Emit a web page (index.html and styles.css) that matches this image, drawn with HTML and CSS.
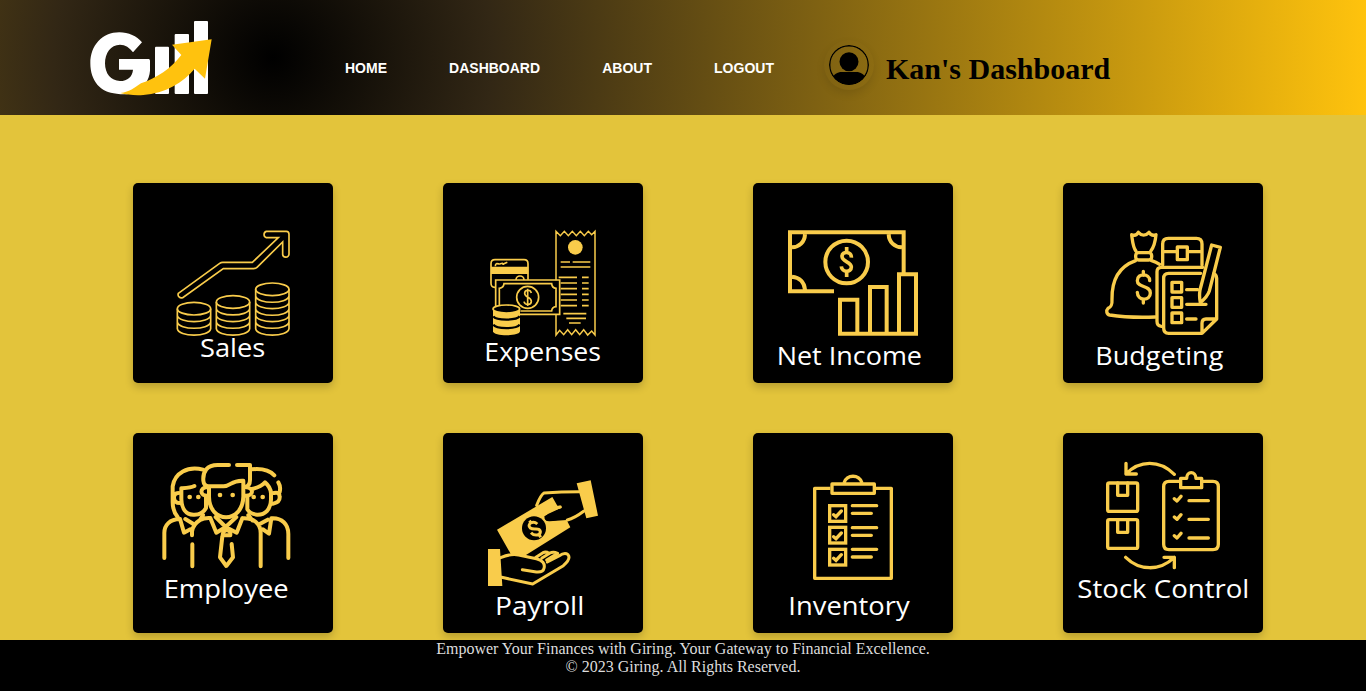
FILE: index.html
```html
<!DOCTYPE html>
<html lang="en">
<head>
<meta charset="utf-8">
<title>Giring Dashboard</title>
<link rel="stylesheet" href="styles.css">
</head>
<body>
<header class="header">
  <svg class="logo" viewBox="45 45 390 255" aria-label="Giring">
    <g fill="#fff">
      <rect x="255" y="140" width="42" height="142" rx="3"/>
      <rect x="314" y="102" width="43" height="180" rx="3"/>
      <rect x="372" y="63" width="42" height="219" rx="3"/>
      <path d="M216 127 L189 157 C179 143 166 134 150 134 C122 134 105 159 105 190 C105 221 123 243 150 243 C173 243 187 230 189 209 H147 V177 H236 Q240 177 240 182 V212 C238 240 220 268 190 279 C174 284 158 284 140 281 C91 279 61 242 61 190 C61 136 97 97 148 97 C176 97 200 108 216 127 Z"/>
    </g>
    <path d="M151 279 C180 276 195 262 213 250 C260 234 304 205 334 165 L306 134 L425 118 L405 236 L374 206 C340 248 285 280 220 285 C195 287 170 284 151 279 Z" fill="#ffc20e"/>
  </svg>
  <nav class="nav">
    <a class="nav-link">HOME</a>
    <a class="nav-link">DASHBOARD</a>
    <a class="nav-link">ABOUT</a>
    <a class="nav-link">LOGOUT</a>
  </nav>
  <div class="user">
    <svg class="avatar" viewBox="0 0 40 40">
      <defs><clipPath id="face"><circle cx="20" cy="20" r="19.5"/></clipPath></defs>
      <circle cx="20" cy="20" r="19.3" fill="none" stroke="#000" stroke-width="1.4"/>
      <circle cx="20" cy="16.7" r="9.5"/>
      <path d="M3 34 C5 29 8 27 13 27 H27 C32 27 35 29 37 34 L30 40 H10 Z" clip-path="url(#face)"/>
    </svg>
    <h1 class="title">Kan's Dashboard</h1>
  </div>
</header>

<main class="grid">
  <a class="card"><svg class="art" viewBox="30 30 600 600">
    <g stroke-width="5">
      <path d="M166 361 L290 271 Q294 268 299 268 H388 L466 194 H430 A10 10 0 0 1 430 175 H490 Q498 175 498 184 V243 A9.500 9.500 0 0 1 479 243 V207 L402 283 Q398 287 392 287 H301 L179 374 A10 10 0 0 1 166 361 Z"/>
      <ellipse cx="213" cy="407" rx="50" ry="19"/>
      <path d="M163 407 V467 C166 493 260 493 263 467 V407 M163 427 C167 452 259 452 263 427 M163 447 C167 472 259 472 263 447"/>
      <ellipse cx="330" cy="387" rx="50" ry="19"/>
      <path d="M280 387 V467 C283 493 377 493 380 467 V387 M280 407 C284 432 376 432 380 407 M280 427 C284 452 376 452 380 427 M280 447 C284 472 376 472 380 447"/>
      <ellipse cx="448" cy="349" rx="50" ry="19"/>
      <path d="M398 349 V467 C401 493 495 493 498 467 V349 M398 369 C402 394 494 394 498 369 M398 388 C402 413 494 413 498 388 M398 408 C402 433 494 433 498 408 M398 427 C402 452 494 452 498 427 M398 447 C402 472 494 472 498 447"/>
    </g>
    <text class="label" x="231" y="553" textLength="196" lengthAdjust="spacingAndGlyphs">Sales</text>
  </svg></a>

  <a class="card"><svg class="art" viewBox="30 30 600 600">
    <g stroke-width="5">
      <path d="M369 322 V175 L382 188 L394 175 L406 188 L418 175 L430 188 L442 175 L454 188 L466 175 L476 185 L486 175 V486 L476 474 L464 486 L452 470 L440 485 L428 470 L416 485 L404 470 L392 485 L380 472 L369 486 V425" stroke-width="4.500"/>
      <circle cx="427" cy="223" r="22" class="solid"/>
      <path d="M383 267 H411 M419 267 H472 M383 282 H472 M377 313 H432 M383 330 H432 M383 347 H432 M383 364 H432 M383 381 H432 M383 398 H432 M447 313 H467 M447 330 H467 M447 347 H467 M447 364 H467 M447 381 H467 M447 398 H467 M391 422 H460 M400 436 H459 M408 450 H443"/>
      <path d="M188 343 H185 Q174 343 174 331 V272 Q174 260 186 260 H273 Q285 260 285 272 V320"/>
      <path class="solid" d="M174 281 H286 V303 H174 Z"/>
      <path d="M187 280 C187 264 200 277 203 272 C213 267 207 278 213 272 L223 268 M249 321 A12 12 0 0 1 273 321"/>
      <path d="M188 404 V321 H380 V424 H260"/>
      <path d="M199 396 V346 Q212 344 213 332 H356 Q357 345 369 346 V401 Q357 402 356 414 H262"/>
      <circle cx="284" cy="373" r="33"/>
      <path d="M295 360 C292 348 275 350 275 361 C275 375 295 370 295 385 C295 397 276 398 273 386 M284 347 V399"/>
      <path class="solid" d="M180 408 V475 C181 491 260 491 261 475 V408 Z"/>
      <ellipse cx="220" cy="408" rx="40" ry="12" fill="#000"/>
      <path stroke="#000" stroke-width="7" d="M181 430 C190 443 250 443 260 430 M181 455 C190 469 250 469 260 455"/>
    </g>
    <text class="label" x="154" y="563" textLength="350" lengthAdjust="spacingAndGlyphs">Expenses</text>
  </svg></a>

  <a class="card"><svg class="art" viewBox="30 30 600 600">
    <g stroke-width="12">
      <path d="M273 355 H141 V178 H482 V300 M186 184 C185 207 169 222 147 223 M437 184 C438 207 454 222 476 223 M147 311 C170 313 184 328 186 350"/>
      <circle cx="311" cy="267" r="64"/>
      <path d="M325 254 C326 234 297 234 297 250 C297 267 325 266 325 282 C325 300 296 299 295 280 M311 222 V240 M311 294 V312" stroke-width="11"/>
      <path d="M291 482 V380 H343 V482 M381 482 V342 H431 V482 M468 482 V304 H519 V482 H285"/>
    </g>
    <text class="label" x="101" y="577" textLength="436" lengthAdjust="spacingAndGlyphs">Net Income</text>
  </svg></a>

  <a class="card"><svg class="art" viewBox="30 30 600 600">
    <g stroke-width="10" stroke-linecap="round" stroke-linejoin="round">
      <path d="M249 235 C239 221 239 207 236 185 Q249 191 256 178 Q272 195 288 178 Q296 191 309 185 C307 207 303 222 293 235"/>
      <rect x="248" y="239" width="48" height="22" rx="9"/>
      <path d="M248 263 C200 280 176 321 177 379 C178 396 175 402 165 406 C159 412 160 424 170 426 C215 433 260 434 307 432 M294 262 Q310 267 320 274"/>
      <path d="M290 323 C291 302 253 298 253 323 C253 345 292 336 292 360 C292 386 253 384 253 358 M271 295 V307 M271 379 V390"/>
      <path d="M329 276 V213 Q329 196 346 196 H430 Q447 196 447 213 V276 M329 236 H371 M404 236 H447"/>
      <rect x="373" y="222" width="30" height="38"/>
      <path d="M449 283 H325 Q312 283 312 296 V445 Q312 459 325 460 M443 301 H347 Q332 301 332 316 V465 Q332 481 347 481 H447 L491 438 V316 Q490 304 482 303 M447 481 V451 Q447 438 459 438 H490"/>
      <path d="M357 328 H386 V357 H357 Z M357 374 H386 V403 H357 Z M357 420 H386 V449 H357 Z M401 350 H434 M401 394 H459 M401 438 H429"/>
      <path d="M476 216 L502 223 L469 354 Q464 370 442 389 Q438 370 441 351 Z"/>
    </g>
    <text class="label" x="127" y="577" textLength="384" lengthAdjust="spacingAndGlyphs">Budgeting</text>
  </svg></a>

  <a class="card"><svg class="art" viewBox="30 30 600 600">
    <g stroke-width="12" stroke-linecap="round" stroke-linejoin="round">
      <path d="M318 126 H284 C252 126 239 145 241 173 C242 184 248 190 257 190 H302 C324 190 324 171 361 173 V221 C359 303 259 303 258 221 V192 M342 126 H381 V170 C381 185 375 191 364 192 M250 193 C230 195 230 219 253 218 M370 193 C393 195 393 219 367 218"/>
      <path d="M240 140 C194 128 155 150 149 190 V238 C149 258 153 269 164 282 M214 189 C204 194 187 195 175 196 V229 C176 255 188 275 211 275 C229 276 241 270 249 255 V222 M166 210 Q153 210 153 224 Q153 240 172 240"/>
      <path d="M386 139 C415 136 440 142 454 157 M466 178 Q474 191 470 207 M387 198 Q413 192 426 178 Q443 192 444 211 V230 C443 260 426 276 402 275 Q382 274 373 259 V222 M453 210 Q470 206 470 222 Q471 237 451 242"/>
      <path d="M124 405 V332 C123 306 141 288 171 288 M171 288 L183 329 L202 319 M207 337 V326 Q209 305 231 291 Q243 284 262 285 L280 329 L308 312 L278 282 M308 312 L341 329 L358 286 M308 312 L340 282 M358 286 C391 284 413 301 413 330 V430 M208 364 V430 M210 302 L187 288 M420 319 L438 332 L445 286 M445 286 C477 284 496 304 496 333 V405 M434 290 L406 305 M231 291 L240 276 M388 292 L376 276"/>
      <path d="M301 326 L311 320 L322 326 V337 H299 Z M298 340 L291 403 L310 429 L330 403 L326 363"/>
      <g stroke="none" fill="#f9cc4b"><circle cx="291" cy="216" r="7"/><circle cx="329" cy="216" r="7"/><circle cx="200" cy="222" r="7"/><circle cx="226" cy="222" r="7"/><circle cx="392" cy="222" r="7"/><circle cx="419" cy="222" r="7"/></g>
    </g>
    <text class="label" x="122" y="525" textLength="375" lengthAdjust="spacingAndGlyphs">Employee</text>
  </svg></a>

  <a class="card"><svg class="art" viewBox="30 30 600 600">
    <path class="solid" d="M431 181 L473 172 L495 278 L460 286 Z M165 378 H201 L208 489 H165 Z"/>
    <path class="solid" d="M192 320 L358 222 L373 248 L386 248 L386 256 L334 280 Q335 296 350 295 L401 291 L412 313 L279 396 L235 396 Z"/>
    <g stroke-width="9" stroke-linejoin="round" stroke-linecap="round">
      <path d="M203 404 Q234 391 257 396 L310 407 C328 411 337 422 333 436 C331 447 322 448 310 447 L268 440 M206 463 L299 483 L391 428 Q415 407 405 395 Q395 387 378 399 L343 417 M309 403 L330 389 Q339 385 348 391 M327 405 L350 391 Q360 385 374 391 L341 411"/>
    </g>
    <circle cx="303" cy="316" r="36" fill="#000" stroke="none"/>
    <path d="M313 303 C299 290 280 305 292 315 C302 323 319 312 322 325 C323 338 304 340 294 329 M289 293 L297 302 M317 333 L323 343" stroke-width="9"/>
    <path d="M386 254 L345 273 Q334 279 335 287 Q338 296 352 294 L401 287 L430 270 V240 H380 Z" fill="#000" stroke="none"/>
    <g stroke-width="9" stroke-linejoin="round" stroke-linecap="round">
      <path d="M311 247 C318 229 323 216 333 210 Q385 206 439 206 M453 264 C437 276 423 286 403 291 M366 256 L382 252"/>
    </g>
    <text class="label" x="186" y="577" textLength="268" lengthAdjust="spacingAndGlyphs">Payroll</text>
  </svg></a>

  <a class="card"><svg class="art" viewBox="30 30 600 600">
    <g stroke-width="10" stroke-linejoin="round">
      <path d="M262 196 H215 V466 H445 V196 H399 M303 180 C310 153 350 153 357 180"/>
      <rect x="267" y="183" width="127" height="28"/>
    </g>
    <g stroke-width="10" stroke-linecap="round">
      <rect x="260" y="248" width="48" height="47"/><rect x="260" y="313" width="48" height="47"/><rect x="260" y="379" width="48" height="47"/>
      <path d="M272 275 L279 281 L295 264 M272 341 L279 347 L295 330 M272 406 L279 412 L295 395 M328 248 H401 M328 271 H385 M328 314 H401 M328 337 H385 M328 379 H401 M328 402 H385"/>
    </g>
    <text class="label" x="136" y="577" textLength="364" lengthAdjust="spacingAndGlyphs">Inventory</text>
  </svg></a>

  <a class="card"><svg class="art" viewBox="30 30 600 600">
    <g stroke-width="10" stroke-linecap="round" stroke-linejoin="round">
      <path d="M219 153 C260 111 319 110 364 154 M219 121 V153 H250 M218 403 C260 444 320 445 364 403 M333 403 H364 V434"/>
      <rect x="164" y="180" width="90" height="85" rx="5"/><path d="M194 180 V217 H224 V180"/>
      <rect x="164" y="290" width="90" height="86" rx="5"/><path d="M194 290 V328 H224 V290"/>
      <path d="M378 175 H348 Q332 175 332 191 V364 Q332 380 348 380 H480 Q496 380 496 364 V191 Q496 175 480 175 H451"/>
      <path d="M383 194 V166 H401 C401 143 428 143 429 166 H446 V194 Z"/>
      <path d="M364 227 L372 234 L384 220 M364 282 L372 289 L384 275 M364 338 L372 345 L384 331 M408 233 H466 M408 289 H466 M408 345 H466"/>
    </g>
    <text class="label" x="73" y="525" textLength="516" lengthAdjust="spacingAndGlyphs">Stock Control</text>
  </svg></a>
</main>

<footer class="footer">
  <p class="footer-line">Empower Your Finances with Giring. Your Gateway to Financial Excellence.</p>
  <p class="footer-line">© 2023 Giring. All Rights Reserved.</p>
</footer>
</body>
</html>
```
FILE: styles.css
```css
* { box-sizing: border-box; }

body {
  margin: 0;
  height: 691px;
  overflow: hidden;
  display: flex;
  flex-direction: column;
  background: #e3c43b;
  font-family: "Liberation Serif", "Times New Roman", serif;
}

.header {
  height: 115px;
  flex: none;
  display: flex;
  align-items: flex-start;
  padding: 15px 0 0 85px;
  background: radial-gradient(circle at 20% 50%, #000 0%, #322715 20%, #ffc30d 100%);
}

.logo { width: 130px; height: 85px; flex: none; }

.nav {
  display: flex;
  gap: 62.100px;
  margin: 45px 0 0 130px;
}

.nav-link {
  color: #fff;
  font: bold 14px/16px "Liberation Sans", Arial, sans-serif;
}

.user {
  display: flex;
  margin: 25px 0 0 50px;
}

.avatar {
  width: 50px;
  height: 50px;
  padding: 5px;
  border-radius: 50%;
  box-shadow: 0 4px 8px rgba(0, 0, 0, .1);
}

.title {
  margin: 12px 0 0 12px;
  font-size: 30px;
  line-height: 34px;
  white-space: nowrap;
}

.grid {
  flex: 1;
  display: grid;
  grid-template-columns: repeat(4, 200px);
  grid-auto-rows: 200px;
  gap: 50px 110px;
  padding: 68px 0 0 133px;
}

.card {
  border-radius: 5px;
  background: #000;
  box-shadow: 0 4px 8px rgba(0, 0, 0, .2);
}

.art {
  display: block;
  width: 200px;
  height: 200px;
  fill: none;
  stroke: #f9cc4b;
}

.solid { fill: #f9cc4b; stroke: none; }

.label {
  fill: #fff;
  stroke: none;
  font: 400 78px "Open Sans", "Noto Sans", sans-serif;
}

.footer {
  height: 51px;
  flex: none;
  position: relative;
  background: #000;
  color: #ddd;
  text-align: center;
}

.footer-line {
  margin: 0;
  font-size: 16px;
  line-height: 18px;
}
```
